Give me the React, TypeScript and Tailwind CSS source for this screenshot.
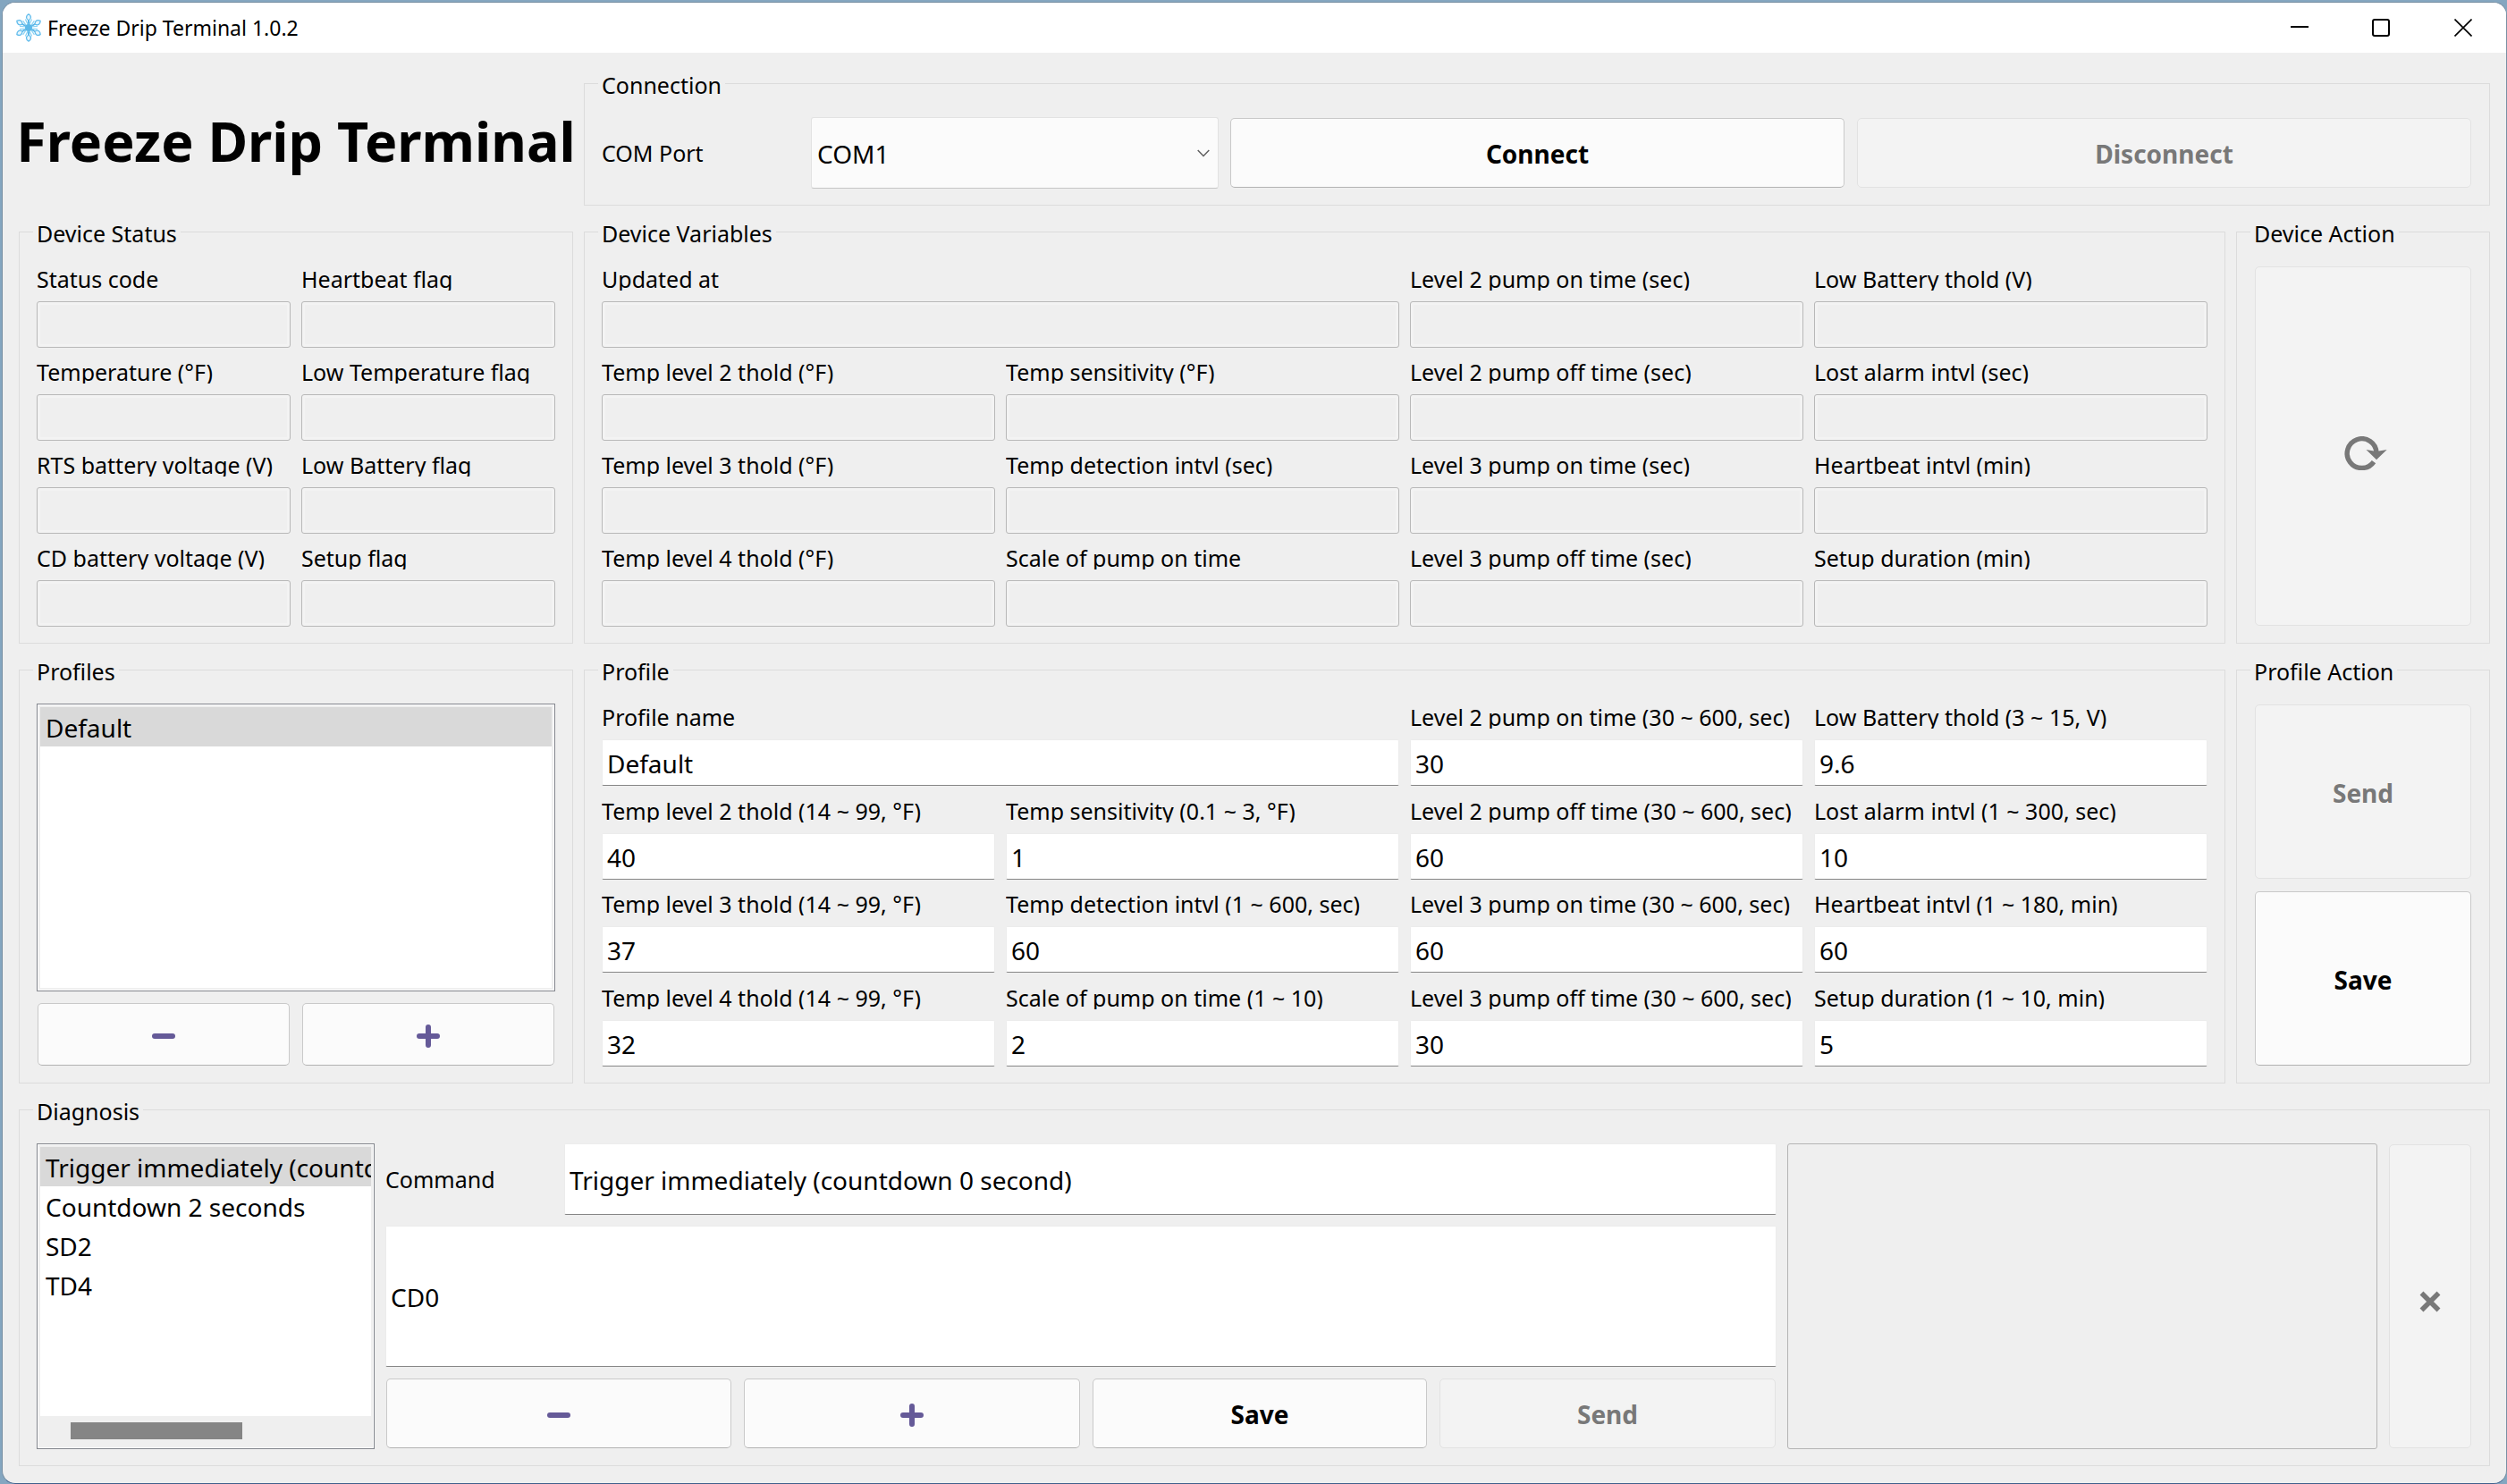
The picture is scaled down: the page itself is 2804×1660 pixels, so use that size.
import React from "react";
import clsx from "clsx";

type FieldProps = { label: string; value?: string; wide?: boolean; readOnly?: boolean };

function Group({ title, className, children }: { title: string; className?: string; children: React.ReactNode }) {
  return (
    <fieldset className={clsx("flex min-w-0 flex-col border border-[#dcdcdc] px-[19px] pt-[21px] pb-[18px]", className)}>
      <legend className="-ml-1 px-1 pt-1 text-[25px] leading-[30px]">{title}</legend>
      {children}
    </fieldset>
  );
}

function Field({ label, value, wide, readOnly }: FieldProps) {
  const id = React.useId();
  return (
    <div className={clsx("flex min-w-0 flex-col gap-3", wide && "col-span-2")}>
      <label htmlFor={id} className="block h-7 overflow-hidden text-[25px] leading-[30px] whitespace-nowrap">
        {label}
      </label>
      {readOnly ? (
        <input
          id={id}
          readOnly
          className="h-[52px] w-full rounded-[3px] border border-[#b8b8b8] bg-[#efefef] px-1 text-[28px] shadow-[inset_0_0_0_3px_#f3f3f3] outline-none"
        />
      ) : (
        <input
          id={id}
          defaultValue={value}
          className="h-[52px] w-full rounded-[2px] border border-[#ececec] border-b-[#868686] bg-white px-[5px] pt-0.5 text-[28px] outline-none"
        />
      )}
    </div>
  );
}

function Btn({
  children,
  disabled,
  label,
  className = "pt-0.5",
}: {
  children: React.ReactNode;
  disabled?: boolean;
  label?: string;
  className?: string;
}) {
  return (
    <button
      type="button"
      disabled={disabled}
      aria-label={label}
      className={clsx(
        "m-px flex min-w-0 items-center justify-center rounded-[5px] border text-[28px] font-bold",
        disabled
          ? "border-[#e2e2e2] bg-[#f3f3f3] text-[#787878]"
          : "border-[#c9c9c9] border-b-[#b2b2b2] bg-[#fbfbfb] text-black",
        className,
      )}
    >
      {children}
    </button>
  );
}

function Minus() {
  return (
    <svg width="26" height="26" viewBox="0 0 26 26" fill="none" stroke="#655a98" strokeWidth="6" strokeLinecap="round">
      <path d="M3 13H23" />
    </svg>
  );
}

function Plus() {
  return (
    <svg width="26" height="26" viewBox="0 0 26 26" fill="none" stroke="#655a98" strokeWidth="6" strokeLinecap="round">
      <path d="M3 13H23M13 3V23" />
    </svg>
  );
}

function Reload() {
  return (
    <svg width="48" height="38" viewBox="0 0 48 38">
      <path d="M33 28.6A16.4 16.4 0 1 1 36 18.5" fill="none" stroke="#787878" strokeWidth="5.4" />
      <path d="M24.5 15L33.2 16.5H38.6L47.7 15L36 26.2Z" fill="#787878" />
    </svg>
  );
}

function Snowflake() {
  return (
    <svg width="32" height="32" viewBox="-16 -16 32 32" fill="none" strokeLinecap="round" strokeLinejoin="round">
      {[0, 60, 120, 180, 240, 300].map((a) => (
        <g key={a} transform={`rotate(${a})`}>
          <path d="M0 0V-8" stroke="#5ab6e8" strokeWidth="2" />
          <path
            d="M0 -8C-3.8 -10.5 -2.8 -13.4 0 -15.2C2.8 -13.4 3.8 -10.5 0 -8Z"
            fill="#e6f6fd"
            stroke="#62bcec"
            strokeWidth="1.3"
          />
          <path d="M0 -2L-3.400 -9M0 -2L3.400 -9" stroke="#8ad2f3" strokeWidth="1.2" />
        </g>
      ))}
      <circle r="4" fill="#5cb8e8" />
    </svg>
  );
}

const statusFields = [
  "Status code",
  "Heartbeat flag",
  "Temperature (°F)",
  "Low Temperature flag",
  "RTS battery voltage (V)",
  "Low Battery flag",
  "CD battery voltage (V)",
  "Setup flag",
];

const variableFields: FieldProps[] = [
  { label: "Updated at", wide: true },
  { label: "Level 2 pump on time (sec)" },
  { label: "Low Battery thold (V)" },
  { label: "Temp level 2 thold (°F)" },
  { label: "Temp sensitivity (°F)" },
  { label: "Level 2 pump off time (sec)" },
  { label: "Lost alarm intvl (sec)" },
  { label: "Temp level 3 thold (°F)" },
  { label: "Temp detection intvl (sec)" },
  { label: "Level 3 pump on time (sec)" },
  { label: "Heartbeat intvl (min)" },
  { label: "Temp level 4 thold (°F)" },
  { label: "Scale of pump on time" },
  { label: "Level 3 pump off time (sec)" },
  { label: "Setup duration (min)" },
];

const profileFields: FieldProps[] = [
  { label: "Profile name", value: "Default", wide: true },
  { label: "Level 2 pump on time (30 ~ 600, sec)", value: "30" },
  { label: "Low Battery thold (3 ~ 15, V)", value: "9.6" },
  { label: "Temp level 2 thold (14 ~ 99, °F)", value: "40" },
  { label: "Temp sensitivity (0.1 ~ 3, °F)", value: "1" },
  { label: "Level 2 pump off time (30 ~ 600, sec)", value: "60" },
  { label: "Lost alarm intvl (1 ~ 300, sec)", value: "10" },
  { label: "Temp level 3 thold (14 ~ 99, °F)", value: "37" },
  { label: "Temp detection intvl (1 ~ 600, sec)", value: "60" },
  { label: "Level 3 pump on time (30 ~ 600, sec)", value: "60" },
  { label: "Heartbeat intvl (1 ~ 180, min)", value: "60" },
  { label: "Temp level 4 thold (14 ~ 99, °F)", value: "32" },
  { label: "Scale of pump on time (1 ~ 10)", value: "2" },
  { label: "Level 3 pump off time (30 ~ 600, sec)", value: "30" },
  { label: "Setup duration (1 ~ 10, min)", value: "5" },
];

const commands = ["Trigger immediately (countdown 0 second)", "Countdown 2 seconds", "SD2", "TD4"];

function List({ label, items, scrollbar }: { label: string; items: string[]; scrollbar?: boolean }) {
  return (
    <div className="flex min-h-0 min-w-0 flex-1 flex-col border border-[#82858c] bg-white p-px">
      <div className="flex flex-1 flex-col border-2 border-[#efefef]">
        <ul role="listbox" aria-label={label} className="flex-1 overflow-hidden">
          {items.map((item, i) => (
            <li
              key={item}
              role="option"
              aria-selected={i === 0}
              className={clsx("h-11 overflow-hidden px-1.5 text-[28px] leading-[46px] whitespace-nowrap", i === 0 && "bg-[#d9d9d9]")}
            >
              {item}
            </li>
          ))}
        </ul>
        {scrollbar && (
          <div className="flex h-[33px] items-start bg-[#efefef] px-[34px] pt-[7px]">
            <div className="h-[19px] w-48 bg-[#858585]" />
          </div>
        )}
      </div>
    </div>
  );
}

export default function App() {
  return (
    <div className="flex min-h-screen flex-col bg-[#84a6c0] pt-0.5 pl-0.5 font-['Noto_Sans','Open_Sans',sans-serif] text-black">
      <div className="flex flex-1 flex-col overflow-hidden rounded-[15px] border border-[#788fa3] border-b-[#3f5f8c] bg-[#efefef]">
        <header className="flex h-14 items-center justify-between bg-white pr-0.5 pl-[13px]">
          <div className="flex items-center gap-[5px]">
            <Snowflake />
            <span className="text-[23px] leading-8">Freeze Drip Terminal 1.0.2</span>
          </div>
          <div className="flex h-full">
            <button type="button" aria-label="Minimize" className="flex w-[91px] items-center justify-center">
              <svg width="20" height="20" viewBox="0 0 20 20" stroke="#000" strokeWidth="2"><path d="M0 9H20" /></svg>
            </button>
            <button type="button" aria-label="Maximize" className="flex w-[91px] items-center justify-center">
              <svg width="20" height="20" viewBox="0 0 20 20" fill="none" stroke="#000" strokeWidth="2"><rect x="1" y="1" width="18" height="18" rx="2" /></svg>
            </button>
            <button type="button" aria-label="Close" className="flex w-[93px] items-center justify-center">
              <svg width="20" height="20" viewBox="0 0 20 20" stroke="#000" strokeWidth="1.6"><path d="M0.5 0.5L19.5 19.5M19.5 0.5L0.5 19.5" /></svg>
            </button>
          </div>
        </header>

        <main className="grid grid-cols-[620fr_1836fr_284fr] gap-3 px-[18px] pt-[17px] pb-[18px]">
          <h1 className="flex min-w-0 items-center justify-center pt-2 text-[61px] leading-none font-bold whitespace-nowrap">
            Freeze Drip Terminal
          </h1>

          <Group title="Connection" className="col-span-2">
            <div className="grid h-20 grid-cols-[222fr_456fr_689fr_689fr] gap-3">
              <label htmlFor="com-port" className="flex items-center pt-0.5 text-[25px]">COM Port</label>
              <div className="relative">
                <select
                  id="com-port"
                  className="h-full w-full appearance-none rounded-[3px] border border-[#e2e2e2] border-b-[#c6c6c6] bg-[#fbfbfb] px-1.5 pt-0.5 text-[28px]"
                >
                  <option>COM1</option>
                </select>
                <svg className="pointer-events-none absolute top-9 right-[10px]" width="14" height="9" viewBox="0 0 14 9" fill="none" stroke="#606060" strokeWidth="1.5">
                  <path d="M0.7 1L7 7.5L13.3 1" />
                </svg>
              </div>
              <Btn>Connect</Btn>
              <Btn disabled>Disconnect</Btn>
            </div>
          </Group>

          <Group title="Device Status">
            <div className="grid grid-cols-2 gap-3">
              {statusFields.map((label) => (
                <Field key={label} label={label} readOnly />
              ))}
            </div>
          </Group>

          <Group title="Device Variables">
            <div className="grid grid-cols-4 gap-3">
              {variableFields.map((f) => (
                <Field key={f.label} {...f} readOnly />
              ))}
            </div>
          </Group>

          <Group title="Device Action">
            <Btn disabled label="Refresh" className="flex-1 pt-4 pl-1.5">
              <Reload />
            </Btn>
          </Group>

          <Group title="Profiles">
            <div className="flex min-h-[406px] flex-1 flex-col gap-3">
              <List label="Profiles" items={["Default"]} />
              <div className="grid h-[72px] grid-cols-2 gap-3">
                <Btn label="Remove profile" className="pt-1"><Minus /></Btn>
                <Btn label="Add profile" className="pt-1"><Plus /></Btn>
              </div>
            </div>
          </Group>

          <Group title="Profile">
            <div className="grid flex-1 grid-cols-4 content-between gap-x-3">
              {profileFields.map((f) => (
                <Field key={f.label} {...f} />
              ))}
            </div>
          </Group>

          <Group title="Profile Action">
            <div className="grid flex-1 grid-rows-2 gap-3">
              <Btn disabled>Send</Btn>
              <Btn>Save</Btn>
            </div>
          </Group>

          <Group title="Diagnosis" className="col-span-3">
            <div className="grid grid-cols-[378fr_1556fr_660fr_94fr] gap-3">
              <List label="Commands" items={commands} scrollbar />
              <div className="flex min-w-0 flex-col gap-3">
                <div className="grid h-20 grid-cols-[188fr_1356fr] gap-3">
                  <label htmlFor="command" className="flex items-center pt-0.5 text-[25px]">Command</label>
                  <input
                    id="command"
                    defaultValue="Trigger immediately (countdown 0 second)"
                    className="w-full min-w-0 rounded-[2px] border border-[#ececec] border-b-[#868686] bg-white px-[5px] pt-0.5 text-[28px] outline-none"
                  />
                </div>
                <input
                  aria-label="Command code"
                  defaultValue="CD0"
                  className="h-[158px] w-full rounded-[2px] border border-[#ececec] border-b-[#868686] bg-white px-[5px] pt-0.5 text-[28px] outline-none"
                />
                <div className="grid h-20 grid-cols-[388fr_378fr_376fr_378fr] gap-3">
                  <Btn label="Remove command" className="pt-1"><Minus /></Btn>
                  <Btn label="Add command" className="pt-1"><Plus /></Btn>
                  <Btn>Save</Btn>
                  <Btn disabled>Send</Btn>
                </div>
              </div>
              <textarea
                aria-label="Output"
                readOnly
                className="block h-full w-full resize-none rounded-[3px] border border-[#b4b4b4] bg-[#efefef] outline-none"
              />
              <Btn disabled label="Clear output" className="pt-3">
                <svg width="24" height="24" viewBox="0 0 24 24" stroke="#787878" strokeWidth="5.5">
                  <path d="M2.5 2.5L21.5 21.5M21.5 2.5L2.5 21.5" />
                </svg>
              </Btn>
            </div>
          </Group>
        </main>
      </div>
    </div>
  );
}
